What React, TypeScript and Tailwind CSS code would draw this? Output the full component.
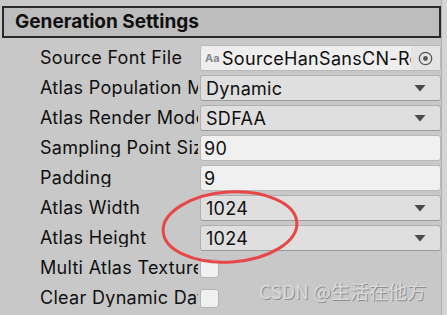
import React from 'react';

type Row =
  | { label: string; kind: 'object'; value: string }
  | { label: string; kind: 'dropdown'; value: string }
  | { label: string; kind: 'text'; value: string }
  | { label: string; kind: 'check' };

const rows: Row[] = [
  { label: 'Source Font File', kind: 'object', value: 'SourceHanSansCN-Regular' },
  { label: 'Atlas Population Mode', kind: 'dropdown', value: 'Dynamic' },
  { label: 'Atlas Render Mode', kind: 'dropdown', value: 'SDFAA' },
  { label: 'Sampling Point Size', kind: 'text', value: '90' },
  { label: 'Padding', kind: 'text', value: '9' },
  { label: 'Atlas Width', kind: 'dropdown', value: '1024' },
  { label: 'Atlas Height', kind: 'dropdown', value: '1024' },
  { label: 'Multi Atlas Textures', kind: 'check' },
  { label: 'Clear Dynamic Data On Build', kind: 'check' },
];

function Arrow() {
  return (
    <svg width="12" height="8" viewBox="0 0 12 8" className="shrink-0">
      <path d="M0.5 1 L11.5 1 L6 7.5 Z" fill="#4a4a4a" />
    </svg>
  );
}

function Field({ row }: { row: Row }) {
  if (row.kind === 'check') {
    return <div className="h-[19px] w-[19px] rounded-[3px] border border-[#b4b4b4] bg-[#f0f0f0]" />;
  }
  if (row.kind === 'object') {
    return (
      <div className="flex h-[26px] w-full items-center overflow-hidden rounded-[3px] border border-[#b8b8b8] bg-[#eeeeee]">
        <span className="w-[21px] shrink-0 pl-[4px] text-[11px] font-bold tracking-normal text-[#8a8a8a]">Aa</span>
        <span className="min-w-0 flex-1 overflow-hidden whitespace-nowrap">{row.value}</span>
        <span className="flex h-full w-[29px] shrink-0 items-center justify-center bg-[#e4e4e4]">
          <svg width="15" height="15" viewBox="0 0 15 15">
            <circle cx="7.5" cy="7.5" r="6.2" fill="none" stroke="#555" strokeWidth="1.3" />
            <circle cx="7.5" cy="7.5" r="2.4" fill="#555" />
          </svg>
        </span>
      </div>
    );
  }
  if (row.kind === 'dropdown') {
    return (
      <div className="flex h-[26px] w-full items-center justify-between rounded-[3px] border border-[#b0b0b0] border-b-[#9a9a9a] bg-[#dfdfdf] pl-[5px] pr-[14px]">
        <span>{row.value}</span>
        <Arrow />
      </div>
    );
  }
  return (
    <div className="flex h-[26px] w-full items-center rounded-[3px] border border-[#b8b8b8] bg-[#f0f0f0] pl-[3px]">
      {row.value}
    </div>
  );
}

export default function App() {
  return (
    <div
      className="relative h-[315px] w-[447px] overflow-hidden bg-[#c8c8c8] text-[18px] tracking-[0.3px] text-[#101010]"
      style={{ fontFamily: 'Inter, "Noto Sans", sans-serif' }}
    >
      <div className="flex">
        <div className="w-[441px] pt-[6px]">
          <div className="ml-[2px] flex h-[32px] items-center border-2 border-[#2a2a2a] bg-[#bdbdbd] pl-[11px] text-[19px] font-bold tracking-normal">
            Generation Settings
          </div>
          <div className="mt-[7px] flex flex-col gap-[4px]">
            {rows.map((row) => (
              <div key={row.label} className="flex h-[26px] items-center">
                <div className="w-[200px] shrink-0 pl-[40px] pr-[2px] leading-none">
                  <div className="overflow-hidden whitespace-nowrap">{row.label}</div>
                </div>
                <div className="flex min-w-0 flex-1 items-center">
                  <Field row={row} />
                </div>
              </div>
            ))}
          </div>
        </div>
        <div className="h-[315px] w-[6px] border-l border-[#b0b0b0] bg-[#d4d4d4]" />
      </div>

      <svg className="absolute left-[158px] top-[186px]" width="145" height="82" viewBox="0 0 145 82">
        <ellipse cx="72" cy="41" rx="67" ry="35" fill="none" stroke="#e8474a" strokeWidth="3" transform="rotate(-4 72 41)" />
      </svg>

      <div
        className="absolute left-[259px] top-[281px] whitespace-nowrap text-[19px] leading-none tracking-normal text-[#dadada]"
        style={{ fontFamily: '"Noto Sans CJK SC", sans-serif', textShadow: '1px 1px 0 #8f8f8f' }}
      >
        CSDN @生活在他方
      </div>
    </div>
  );
}
